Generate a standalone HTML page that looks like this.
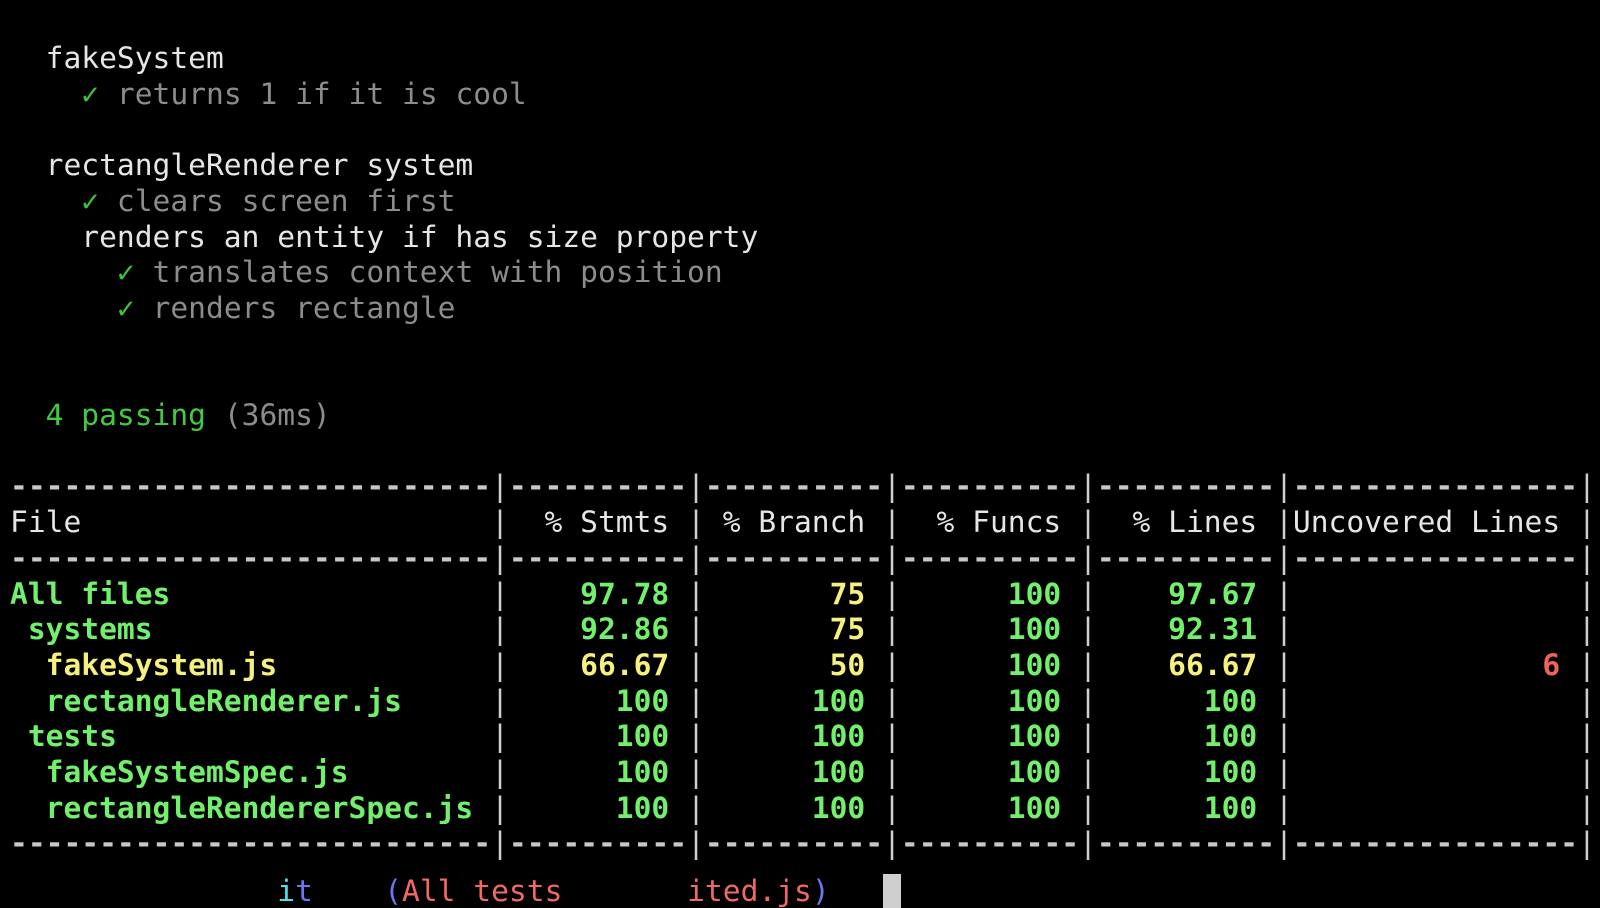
<!DOCTYPE html>
<html><head><meta charset="utf-8"><style>
html,body{margin:0;padding:0;background:#000;width:1600px;height:871px;overflow:hidden}
#t{position:absolute;left:10px;top:41px;font-family:"DejaVu Sans Mono","Liberation Mono",monospace;font-size:29.6px;line-height:35.7px;white-space:pre;color:#e6e6e6}
.g{color:#8c8c8c}.ck{color:#3cc43c}.p{color:#43c943}
.b{font-weight:bold}.G{color:#72f06c;font-weight:bold}.Y{color:#f6f07c;font-weight:bold}.R{color:#f0635c;font-weight:bold}
.d{color:#c8c8c8;font-weight:bold}.v{color:#cfcfcf}
.c{color:#4fe0e8}.bl{color:#6a78f0}.rd{color:#f06a64}
.cur{background:#cfcfcf}
.last{position:relative;top:12px}
</style></head><body><div id="t">  fakeSystem
    <span class="ck">✓</span><span class="g"> returns 1 if it is cool</span>

  rectangleRenderer system
    <span class="ck">✓</span><span class="g"> clears screen first</span>
    renders an entity if has size property
      <span class="ck">✓</span><span class="g"> translates context with position</span>
      <span class="ck">✓</span><span class="g"> renders rectangle</span>


  <span class="p">4 passing</span><span class="g"> (36ms)</span>

<span class="d">---------------------------</span><span class="v">|</span><span class="d">----------</span><span class="v">|</span><span class="d">----------</span><span class="v">|</span><span class="d">----------</span><span class="v">|</span><span class="d">----------</span><span class="v">|</span><span class="d">----------------</span><span class="v">|</span>
File                       <span class="v">|</span>  % Stmts <span class="v">|</span> % Branch <span class="v">|</span>  % Funcs <span class="v">|</span>  % Lines <span class="v">|</span>Uncovered Lines <span class="v">|</span>
<span class="d">---------------------------</span><span class="v">|</span><span class="d">----------</span><span class="v">|</span><span class="d">----------</span><span class="v">|</span><span class="d">----------</span><span class="v">|</span><span class="d">----------</span><span class="v">|</span><span class="d">----------------</span><span class="v">|</span>
<span class="G">All files                  </span><span class="v">|</span><span class="G">    97.78 </span><span class="v">|</span><span class="Y">       75 </span><span class="v">|</span><span class="G">      100 </span><span class="v">|</span><span class="G">    97.67 </span><span class="v">|</span>                <span class="v">|</span>
<span class="G"> systems                   </span><span class="v">|</span><span class="G">    92.86 </span><span class="v">|</span><span class="Y">       75 </span><span class="v">|</span><span class="G">      100 </span><span class="v">|</span><span class="G">    92.31 </span><span class="v">|</span>                <span class="v">|</span>
<span class="Y">  fakeSystem.js            </span><span class="v">|</span><span class="Y">    66.67 </span><span class="v">|</span><span class="Y">       50 </span><span class="v">|</span><span class="G">      100 </span><span class="v">|</span><span class="Y">    66.67 </span><span class="v">|</span><span class="R">              6 </span><span class="v">|</span>
<span class="G">  rectangleRenderer.js     </span><span class="v">|</span><span class="G">      100 </span><span class="v">|</span><span class="G">      100 </span><span class="v">|</span><span class="G">      100 </span><span class="v">|</span><span class="G">      100 </span><span class="v">|</span>                <span class="v">|</span>
<span class="G"> tests                     </span><span class="v">|</span><span class="G">      100 </span><span class="v">|</span><span class="G">      100 </span><span class="v">|</span><span class="G">      100 </span><span class="v">|</span><span class="G">      100 </span><span class="v">|</span>                <span class="v">|</span>
<span class="G">  fakeSystemSpec.js        </span><span class="v">|</span><span class="G">      100 </span><span class="v">|</span><span class="G">      100 </span><span class="v">|</span><span class="G">      100 </span><span class="v">|</span><span class="G">      100 </span><span class="v">|</span>                <span class="v">|</span>
<span class="G">  rectangleRendererSpec.js </span><span class="v">|</span><span class="G">      100 </span><span class="v">|</span><span class="G">      100 </span><span class="v">|</span><span class="G">      100 </span><span class="v">|</span><span class="G">      100 </span><span class="v">|</span>                <span class="v">|</span>
<span class="d">---------------------------</span><span class="v">|</span><span class="d">----------</span><span class="v">|</span><span class="d">----------</span><span class="v">|</span><span class="d">----------</span><span class="v">|</span><span class="d">----------</span><span class="v">|</span><span class="d">----------------</span><span class="v">|</span>
<span class="last">               <span class="c">i</span><span class="bl">t</span>    <span class="bl">(</span><span class="rd">All tests</span>     <span class="rd">  ited.js</span><span class="bl">)</span>   <span class="cur"> </span></span>
</div></body></html>
